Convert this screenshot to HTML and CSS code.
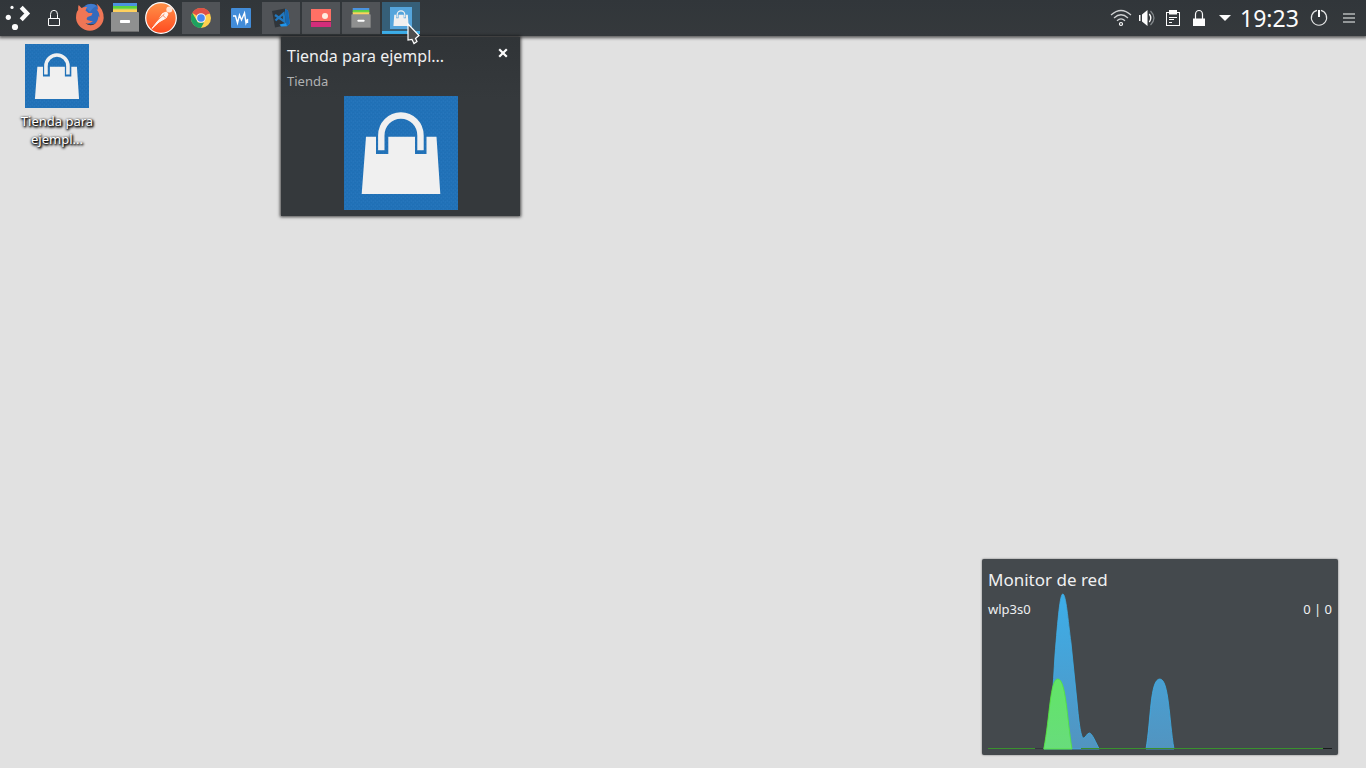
FILE: index.html
```html
<!DOCTYPE html>
<html lang="es">
<head>
<meta charset="utf-8">
<title>Escritorio</title>
<link rel="stylesheet" href="styles.css">
</head>
<body>
<svg class="defs" width="0" height="0">
  <defs>
    <pattern id="weave" width="4" height="4" patternUnits="userSpaceOnUse">
      <path d="M0 .5H2M2 2.5H4" stroke="#155d9f" stroke-opacity=".12"/>
      <path d="M1.5 1V3M3.5 0V2" stroke="#4b96d8" stroke-opacity=".1"/>
    </pattern>
    <linearGradient id="blue" gradientUnits="userSpaceOnUse" x1="0" y1="594" x2="0" y2="749"><stop offset="0" stop-color="#3daee9"/><stop offset="1" stop-color="#5294c0"/></linearGradient>
    <linearGradient id="green" x1="0" y1="0" x2="0" y2="1"><stop offset="0" stop-color="#62e567"/><stop offset="1" stop-color="#68dc7c"/></linearGradient>
    <linearGradient id="orange" x1="0" y1="0" x2="0" y2="1"><stop offset="0" stop-color="#ff9249"/><stop offset="1" stop-color="#ff4b20"/></linearGradient>
  </defs>
  <symbol id="bag" viewBox="0 0 114 114">
    <path d="M22 40.7H32V58H44.3V40.7H71V58H82.5V40.7H92.5L96.3 98H17.7Z" fill="#f0f0f0"/>
    <path d="M37.3 54.3V39.5a19.6 20 0 0 1 39.2 0V54.3" fill="none" stroke="#f0f0f0" stroke-width="6.4"/>
  </symbol>
  <symbol id="drawer" viewBox="0 0 28 29">
    <path d="M2 0H26V4H2Z" fill="#4b93df"/><path d="M2 3H26V7H2Z" fill="#5bd33f"/><path d="M2 5.5H26V7H2Z" fill="#a5d958"/><path d="M2 6.5H26V11H2Z" fill="#ffd05d"/>
    <rect y="9" width="28" height="20" rx="1" fill="#8f9090"/><path d="M.5 28.5H27.5" stroke="#6c6d6d"/><rect x="9" y="17" width="10" height="3" rx=".7" fill="#fff"/>
  </symbol>
</svg>

<main class="desktop">
  <header class="panel">
    <nav class="launchers">
      <span class="launcher"><svg width="36" height="36"><circle cx="12" cy="7.4" r="1.6" fill="#fcfcfc"/><circle cx="8.3" cy="17.3" r="2.6" fill="#fcfcfc"/><circle cx="15" cy="27" r="3.1" fill="#fcfcfc"/><path d="M21.2 7.3L27.2 13.5L21.2 19.7" fill="none" stroke="#fcfcfc" stroke-width="4.2"/></svg></span>
      <span class="launcher"><svg width="36" height="36"><path d="M12.5 18.500H23.500V25.500H12.500Z" fill="none" stroke="#fcfcfc"/><path d="M14.500 18V14.300a3.500 4 0 0 1 7 0V18" fill="none" stroke="#fcfcfc"/></svg></span>
      <span class="launcher"><svg width="36" height="36" viewBox="71 0 36 36"><circle cx="90" cy="14" r="10.300" fill="#346abc"/><path d="M84 6Q90 2 96 6Q92 7 89 12L86 9Z" fill="#3f7bd0"/><path d="M77.700 5L80.500 8Q83 6.500 86 7L84.500 10.500L87.500 13H91.500L90.500 15.500L86.500 17L85.500 19Q87 21 92 21Q88 24.500 84.500 23Q88 26.500 93 24.500Q97 22 97.500 16L98.500 17.500Q98.500 12 95.500 9.500L97 9.500Q97 6 95.500 3.500Q102.700 9 102.700 18A13.900 13.900 0 0 1 75 18Q75 12 77.200 10Q76.800 7 77.700 5Z" fill="#ef7656"/></svg></span>
      <span class="launcher drawer-launcher"><svg width="28" height="29"><use href="#drawer"/></svg></span>
      <span class="launcher"><svg width="34" height="34"><circle cx="17" cy="17" r="15.300" fill="url(#orange)" stroke="#fff" stroke-width="1.200"/><circle cx="25.300" cy="8.600" r="3" fill="#ffe2d3"/><path d="M18.500 12.500L22.500 11L24 13L22 17L15 21L8 27.500L14.500 19Z" fill="#fff3ed" stroke="#fff3ed"/><path d="M8.200 24L20.500 13M19 14.500L21.800 17" stroke="#f87040" stroke-width=".8"/></svg></span>
    </nav>
    <nav class="tasks">
      <span class="task open"><svg width="20" height="20" viewBox="0 0 20 20"><circle cx="10" cy="10" r="10" fill="#ffd04d"/><path d="M10 10L1.300 5A10 10 0 0 1 18.700 5Z" fill="#df5146"/><path d="M1.300 5L7 14.500H13L10 20A10 10 0 0 1 1.300 5" fill="#1da261"/><path d="M10 5.300H18.800" stroke="#df5146" stroke-width="1"/><circle cx="10" cy="10" r="4.800" fill="#f1f1f1"/><circle cx="10" cy="10" r="3.800" fill="#4688f4"/></svg></span>
      <span class="task"><svg width="20" height="20"><rect width="20" height="20" rx="1" fill="#428cd8"/><path d="M2 8H4.500L6.500 15L8.500 7L10.500 12L13.500 5L15 15L16.500 11V15" fill="none" stroke="#fff" stroke-width="1.400"/></svg></span>
      <span class="task open"><svg width="20" height="20" viewBox="0 0 20 20"><path d="M1 3L14 .5L16 17L4 19.500Z" fill="#30353a"/><path d="M4 7L13.500 13.500L12.500 5.500L4.500 12.500" fill="none" stroke="#2178bf" stroke-width="2.300"/><path d="M14 1L17 2.500L18.800 15.500L16 18.200L10 18.500L8.500 16.500L15 15Z" fill="#2196eb"/><path d="M14 1L15 15L16 18.200L18.800 15.500L17 2.500Z" fill="#1467b3"/></svg></span>
      <span class="task open"><svg width="20" height="18"><path d="M0 0H20V13H0Z" fill="#ff7065"/><path d="M0 13H20V18H0Z" fill="#d42d7b"/><path d="M0 12.500H20" stroke="#762b43"/><circle cx="14" cy="7" r="3" fill="#ffece0"/></svg></span>
      <span class="task open"><svg width="20" height="20"><use href="#drawer"/></svg></span>
      <span class="task active"><svg class="mini-bag" width="22" height="22"><use href="#bag"/></svg></span>
    </nav>
    <div class="tray">
      <span class="tray-item"><svg width="26" height="36"><g fill="none" stroke="#d0d2d3" stroke-width="1.200"><path d="M3 15Q13 6 23 15M6 18Q13 11.500 20 18M9 20.800Q13 17 17 20.800"/><circle cx="13" cy="24" r="1.500" stroke="#fff"/></g></svg></span>
      <span class="tray-item"><svg width="26" height="36"><path d="M5 15H6.500V21H5ZM8 14.500L13.500 10V26L8 21.500Z" fill="#fcfcfc"/><path d="M15.300 14Q18.300 18 15.300 22" fill="none" stroke="#fcfcfc" stroke-width="1.300"/><path d="M16.500 11Q23.500 18 16.500 25" fill="none" stroke="#858a8d" stroke-width="1.200"/></svg></span>
      <span class="tray-item"><svg width="26" height="36"><rect x="6.500" y="12.500" width="13" height="13" fill="none" stroke="#fcfcfc"/><path d="M9 10H17V14.500H9Z" fill="#fcfcfc"/><path d="M9 17.500H17M9 19.500H14M9 22.500H12" stroke="#fcfcfc"/></svg></span>
      <span class="tray-item"><svg width="26" height="36"><path d="M7 18.500H19V26H7Z" fill="#fcfcfc"/><path d="M9.500 19V14.500a3.500 4 0 0 1 7 0V19" fill="none" stroke="#fcfcfc" stroke-width="1.200"/></svg></span>
      <span class="tray-item"><svg width="26" height="36"><path d="M7 15H19L13 21Z" fill="#fcfcfc"/></svg></span>
      <time class="clock">19:23</time>
      <span class="power"><svg width="20" height="36"><path d="M8 10.300A7.600 7.600 0 1 0 12 10.300" fill="none" stroke="#e4e5e5" stroke-width="1.200"/><path d="M10 10V17" stroke="#fcfcfc" stroke-width="2"/></svg></span>
      <span class="menu"><svg width="12" height="36"><path d="M0 14H12M0 18H12M0 22H12" stroke="#949899" stroke-width="2"/></svg></span>
    </div>
  </header>

  <div class="shortcut">
    <svg class="shortcut-icon" width="64" height="64" viewBox="0 0 64 64"><rect width="64" height="64" fill="#2172b8"/><rect width="64" height="64" fill="url(#weave)"/><use href="#bag"/></svg>
    <span class="shortcut-label">Tienda para<br>ejempl...</span>
  </div>

  <aside class="preview">
    <div class="preview-head">
      <h1 class="preview-title">Tienda para ejempl...</h1>
      <svg class="close" width="10" height="10"><path d="M1.200 1.200L8.800 8.800M8.800 1.200L1.200 8.800" stroke="#fcfcfc" stroke-width="2.200"/></svg>
    </div>
    <p class="preview-sub">Tienda</p>
    <svg class="preview-image" width="114" height="114"><rect width="114" height="114" fill="#2172b8"/><rect width="114" height="114" fill="url(#weave)"/><use href="#bag"/></svg>
  </aside>

  <section class="monitor">
    <h2 class="monitor-title">Monitor de red</h2>
    <div class="monitor-row"><span>wlp3s0</span><span>0 | 0</span></div>
    <svg class="plot" width="344" height="157" viewBox="988 593 344 157">
      <path d="M988 748.500H1332" stroke="#34393c"/>
      <path d="M1323 748.500H1332" stroke="#171a1b"/>
      <path d="M1044 749C1052 720 1053 686 1055 655C1058 618 1060 594 1062.800 594C1066 594 1068 620 1071 643L1077 702C1079 724 1081 738 1083.500 738C1085.500 738 1087 733 1089.500 733C1092 733 1096 743 1099.300 749Z" fill="url(#blue)" stroke="#3daee9" stroke-width=".8"/>
      <path d="M1146 749C1151 720 1150 679 1159.800 679C1169 679 1169 720 1174 749Z" fill="url(#blue)" stroke="#3daee9" stroke-width=".8"/>
      <path d="M1043.800 749C1050 716 1050 679 1057.800 679C1066 679 1067 719 1072 749Z" fill="url(#green)" stroke="#55e43d" stroke-width=".9"/>
      <path d="M988 748.500H1035M1081 748.500H1323" stroke="#39912d"/>
    </svg>
  </section>

  <svg class="cursor" width="16" height="24"><path d="M1 2V18L5 17.500L7 21.500L10 19.500L8.500 16.500L12 13.500Z" fill="#4d4d4d" stroke="#fff" stroke-width="1.200"/></svg>
</main>
</body>
</html>
```
FILE: styles.css
```css
* { box-sizing: border-box; }
body { margin: 0; font-family: "Noto Sans", sans-serif; }
h1, h2, p { margin: 0; font-weight: 400; }
svg { display: block; flex: none; }
.defs { position: absolute; }
.desktop { position: relative; width: 1366px; height: 768px; overflow: hidden; background: #e1e1e1; }

.panel { display: flex; height: 36px; background: linear-gradient(#31363a, #35393c); box-shadow: 0 1px 3px 1px rgba(0, 0, 0, .6); }
.launchers { display: flex; width: 182px; }
.launcher { display: flex; align-items: center; justify-content: center; width: 36px; height: 36px; }
.launcher:nth-child(n+3) { margin-left: -.3px; }
.drawer-launcher { padding-bottom: 1px; }
.tasks { display: flex; gap: 2px; padding-top: 2px; }
.task { display: flex; align-items: center; justify-content: center; width: 38px; height: 32px; }
.open { background: #505357; }
.active { background: #365f78; border-bottom: 3px solid #3daee9; padding-top: 3px; }
.mini-bag { background: #55a5dc; }
.tray { display: flex; align-items: center; margin-left: auto; padding-right: 11px; color: #fcfcfc; }
.tray-item { width: 26px; }
.clock { width: 71px; padding-left: 2px; font-size: 23px; line-height: 36px; }
.power { width: 34px; }
.menu { width: 12px; }

.shortcut { display: flex; flex-direction: column; align-items: center; width: 114px; padding-top: 8px; }
.shortcut-label { margin-top: 4px; text-align: center; color: #fff; font-size: 13px; line-height: 18px; text-shadow: 1px 1px 2px #000, 0 1px 3px #000, 1px 1px 3px #000; }

.preview { position: absolute; left: 281px; top: 37px; width: 239px; height: 179px; padding: 6px; background: linear-gradient(#303437, #35393c 35%); box-shadow: 0 0 3px 1px rgba(0, 0, 0, .7); color: #eff0f1; }
.preview-head { display: flex; justify-content: space-between; height: 27px; padding-right: 6px; }
.preview-title { font-size: 16px; line-height: 26px; }
.close { margin-top: 5px; }
.preview-sub { height: 26px; color: #b0b2b3; font-size: 13px; line-height: 23px; }
.preview-image { margin: 0 auto; }

.monitor { position: absolute; left: 982px; top: 559px; width: 356px; height: 196px; padding: 6px; border-radius: 2px; background: #44494d; box-shadow: 0 0 2px rgba(0, 0, 0, .55); color: #eff0f1; }
.monitor-title { font-size: 17px; line-height: 30px; }
.monitor-row { display: flex; justify-content: space-between; font-size: 13px; line-height: 29px; }
.plot { margin-top: -31px; }
.cursor { position: absolute; left: 407px; top: 22px; }
```
